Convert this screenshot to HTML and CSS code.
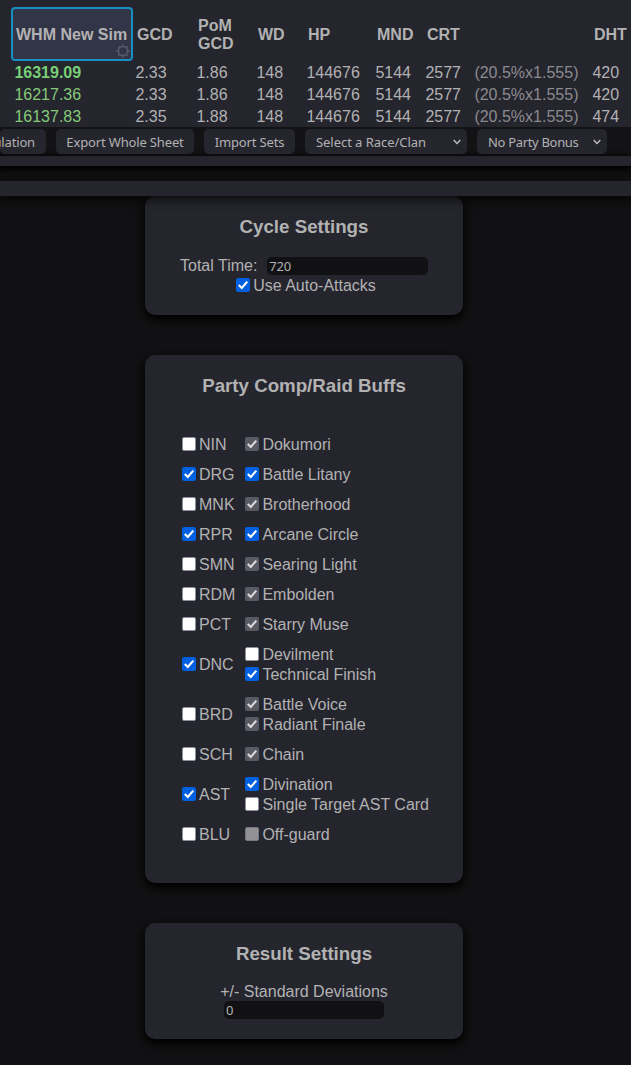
FILE: index.html
```html
<!DOCTYPE html>
<html lang="en">
<head>
<meta charset="utf-8">
<title>WHM New Sim</title>
<link rel="stylesheet" href="styles.css">
</head>
<body>
<svg class="defs" width="0" height="0"><symbol id="check" viewBox="0 0 14 14"><path d="M2.8 7 5.8 10 11.3 3.6" fill="none" stroke="currentColor" stroke-width="2.1"/></symbol></svg>
<section class="gear">
  <div class="row head">
    <div class="sim">WHM New Sim
      <svg class="cog" viewBox="0 0 14 14"><circle cx="7" cy="7" r="4.5"/><path d="M7 2.5V.3M7 11.5v2.2M2.5 7H.3M11.5 7h2.2M3.8 3.8 2.3 2.3M10.2 3.8l1.5-1.5M3.8 10.2l-1.5 1.5M10.2 10.2l1.5 1.5"/></svg>
    </div>
    <div>GCD</div><div>PoM<br>GCD</div><div>WD</div><div>HP</div><div>MND</div><div>CRT</div><div></div><div>DHT</div>
  </div>
  <div class="row"><b class="dps best">16319.09</b><span>2.33</span><span>1.86</span><span>148</span><span>144676</span><span>5144</span><span>2577</span><span class="dim">(20.5%x1.555)</span><span>420</span></div>
  <div class="row"><span class="dps">16217.36</span><span>2.33</span><span>1.86</span><span>148</span><span>144676</span><span>5144</span><span>2577</span><span class="dim">(20.5%x1.555)</span><span>420</span></div>
  <div class="row"><span class="dps">16137.83</span><span>2.35</span><span>1.88</span><span>148</span><span>144676</span><span>5144</span><span>2577</span><span class="dim">(20.5%x1.555)</span><span>474</span></div>
</section>
<nav class="toolbar">
  <div class="btn b-sim"><span>ulation</span></div>
  <div class="btn b-export"><span>Export Whole Sheet</span></div>
  <div class="btn b-import"><span>Import Sets</span></div>
  <div class="btn select b-race"><span>Select a Race/Clan</span><svg viewBox="0 0 8 6"><path d="M.7 1 4 4.4 7.3 1"/></svg></div>
  <div class="btn select b-party"><span>No Party Bonus</span><svg viewBox="0 0 8 6"><path d="M.7 1 4 4.4 7.3 1"/></svg></div>
</nav>
<div class="strip"></div>
<div class="divider"></div>
<main>
  <section class="card cycle">
    <h3>Cycle Settings</h3>
    <div class="field"><span>Total Time:</span><div class="input">720</div></div>
    <div class="opt center"><i class="cb on"><svg><use href="#check"/></svg></i><span>Use Auto-Attacks</span></div>
  </section>
  <section class="card party">
    <h3>Party Comp/Raid Buffs</h3>
    <div class="buffs">
      <div class="job"><div class="opt"><i class="cb"></i><span>NIN</span></div><div><div class="opt"><i class="cb dis"><svg><use href="#check"/></svg></i><span>Dokumori</span></div></div></div>
      <div class="job"><div class="opt"><i class="cb on"><svg><use href="#check"/></svg></i><span>DRG</span></div><div><div class="opt"><i class="cb on"><svg><use href="#check"/></svg></i><span>Battle Litany</span></div></div></div>
      <div class="job"><div class="opt"><i class="cb"></i><span>MNK</span></div><div><div class="opt"><i class="cb dis"><svg><use href="#check"/></svg></i><span>Brotherhood</span></div></div></div>
      <div class="job"><div class="opt"><i class="cb on"><svg><use href="#check"/></svg></i><span>RPR</span></div><div><div class="opt"><i class="cb on"><svg><use href="#check"/></svg></i><span>Arcane Circle</span></div></div></div>
      <div class="job"><div class="opt"><i class="cb"></i><span>SMN</span></div><div><div class="opt"><i class="cb dis"><svg><use href="#check"/></svg></i><span>Searing Light</span></div></div></div>
      <div class="job"><div class="opt"><i class="cb"></i><span>RDM</span></div><div><div class="opt"><i class="cb dis"><svg><use href="#check"/></svg></i><span>Embolden</span></div></div></div>
      <div class="job"><div class="opt"><i class="cb"></i><span>PCT</span></div><div><div class="opt"><i class="cb dis"><svg><use href="#check"/></svg></i><span>Starry Muse</span></div></div></div>
      <div class="job"><div class="opt"><i class="cb on"><svg><use href="#check"/></svg></i><span>DNC</span></div><div><div class="opt"><i class="cb"></i><span>Devilment</span></div><div class="opt"><i class="cb on"><svg><use href="#check"/></svg></i><span>Technical Finish</span></div></div></div>
      <div class="job"><div class="opt"><i class="cb"></i><span>BRD</span></div><div><div class="opt"><i class="cb dis"><svg><use href="#check"/></svg></i><span>Battle Voice</span></div><div class="opt"><i class="cb dis"><svg><use href="#check"/></svg></i><span>Radiant Finale</span></div></div></div>
      <div class="job"><div class="opt"><i class="cb"></i><span>SCH</span></div><div><div class="opt"><i class="cb dis"><svg><use href="#check"/></svg></i><span>Chain</span></div></div></div>
      <div class="job"><div class="opt"><i class="cb on"><svg><use href="#check"/></svg></i><span>AST</span></div><div><div class="opt"><i class="cb on"><svg><use href="#check"/></svg></i><span>Divination</span></div><div class="opt"><i class="cb"></i><span>Single Target AST Card</span></div></div></div>
      <div class="job"><div class="opt"><i class="cb"></i><span>BLU</span></div><div><div class="opt"><i class="cb off"></i><span>Off-guard</span></div></div></div>
    </div>
  </section>
  <section class="card result">
    <h3>Result Settings</h3>
    <div class="label">+/- Standard Deviations</div>
    <div class="input">0</div>
  </section>
</main>
</body>
</html>
```
FILE: styles.css
```css
* { box-sizing: border-box; }
body { margin: 0; height: 1065px; overflow: hidden; background: #111113; color: #b2b2b2; font: 16px/20px "Liberation Sans", Arial, sans-serif; }
.defs { display: block; }
.gear { height: 127px; padding-top: 7px; background: #25252e; overflow: hidden; }
.row { display: grid; grid-template-columns: 120px 61px 60px 50px 69px 50px 49px 118px 60px; margin-left: 15px; width: 650px; height: 22px; line-height: 24px; white-space: nowrap; }
.row > span { padding-left: .4px; }
.row > .dps { margin-left: -.6px; padding: 0; }
.head { height: 54px; align-items: center; font-weight: bold; line-height: 18px; }
.head > div { padding: 1px 0 0 2px; }
.head > .sim { position: relative; width: 122px; height: 54px; margin-left: -4px; padding: 0 0 0 3px; line-height: 51px; border: 2px solid #178fc2; border-radius: 4px; background: #323448; }
.cog { position: absolute; right: 1px; bottom: 1px; width: 14px; height: 14px; fill: none; stroke: #5c5d6b; stroke-width: 1.3; }
.dps { color: #85ca79; }
.best { color: #77cf77; }
.dim { color: #8b8b8e; }
.toolbar { display: flex; gap: 10px; height: 29px; padding-top: 2px; background: #131315; overflow: hidden; }
.btn { flex: none; display: flex; align-items: center; justify-content: center; height: 25px; border-radius: 5px; background: #25252e; font: 13px/25px "Noto Sans", sans-serif; letter-spacing: -.15px; white-space: nowrap; }
.btn span { padding-top: 1px; }
.b-sim { width: 46px; padding-right: 11px; justify-content: flex-end; }
.b-export { width: 138px; }
.b-import { width: 91px; }
.b-race { width: 162px; letter-spacing: -.05px; }
.b-party { width: 130px; letter-spacing: -.32px; }
.select { justify-content: space-between; padding: 0 6px 0 11px; }
.select svg { width: 8px; height: 6px; fill: none; stroke: #c0c0c0; stroke-width: 1.4; }
.strip { height: 10px; background: #25252e; box-shadow: 0 2px 6px 2px #000; }
.divider { position: relative; z-index: 1; height: 15px; margin-top: 15px; background: #25252e; box-shadow: 0 4px 10px 1px rgba(0,0,0,.6); }
main { display: flex; flex-direction: column; gap: 40px; width: 318px; margin-left: 145px; }
.card { border-radius: 10px; background: #25252e; box-shadow: 0 4px 10px 1px #000; }
h3 { margin: 0; padding-top: 20px; font-size: 18.72px; line-height: 22px; text-align: center; }
.cycle { height: 119px; }
.field { display: flex; align-items: center; gap: 10px; padding: 18px 0 0 35px; height: 37px; }
.input { width: 161px; height: 18px; padding-left: 2px; border-radius: 5px; background: #111113; font: 13px/19px "Noto Sans", sans-serif; letter-spacing: -.2px; }
.opt { display: flex; align-items: center; height: 20px; gap: 3px; white-space: nowrap; }
.opt span { padding-top: 2px; }
.job > div + div span { padding-left: .4px; }
.center { justify-content: center; padding-left: 4px; }
.cb { flex: none; width: 14px; height: 14px; border: 1px solid #8f8f9d; border-radius: 2px; background: #fff; color: #fff; }
.cb svg { display: block; width: 14px; height: 14px; }
.cb.on { border: 0; background: #0060df; }
.cb.dis { border: 0; background: #5a5a65; color: #d9d9dc; }
.cb.off { background: #919196; border-color: #77777f; }
.party { height: 528px; }
.buffs { display: grid; gap: 10px; padding: 37px 0 0 37px; }
.job { display: grid; grid-template-columns: 63px 1fr; align-items: center; }
.result { height: 116px; }
.label { padding-top: 17px; text-align: center; }
.result .input { width: 160px; margin: -1px 0 0 79px; }
```
